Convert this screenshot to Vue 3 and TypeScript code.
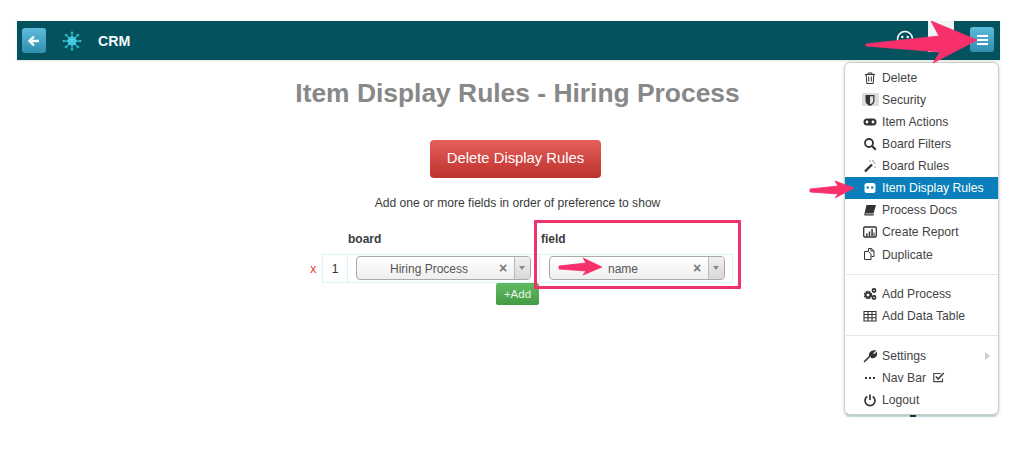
<script setup lang="ts">
interface MenuItem {
  label: string
  icon: string
  active?: boolean
  check?: boolean
  submenu?: boolean
}

const groups: MenuItem[][] = [
  [
    { label: 'Delete', icon: 'trash' },
    { label: 'Security', icon: 'shield' },
    { label: 'Item Actions', icon: 'gamepad' },
    { label: 'Board Filters', icon: 'search' },
    { label: 'Board Rules', icon: 'wand' },
    { label: 'Item Display Rules', icon: 'face', active: true },
    { label: 'Process Docs', icon: 'book' },
    { label: 'Create Report', icon: 'report' },
    { label: 'Duplicate', icon: 'copy' }
  ],
  [
    { label: 'Add Process', icon: 'cogs' },
    { label: 'Add Data Table', icon: 'table' }
  ],
  [
    { label: 'Settings', icon: 'wrench', submenu: true },
    { label: 'Nav Bar', icon: 'dots', check: true },
    { label: 'Logout', icon: 'power' }
  ]
]

const rules = [{ id: 1, board: 'Hiring Process', field: 'name' }]
</script>

<template>
  <div class="page">
    <header class="nav">
      <button class="nav-btn back" aria-label="Back">
        <svg width="12" height="12" viewBox="0 0 12 12">
          <path d="M6 1.500 1.500 6 6 10.500M2 6h9" fill="none" stroke="#fff" stroke-width="2.400" />
        </svg>
      </button>
      <svg class="logo" width="20" height="20" viewBox="0 0 20 20">
        <g stroke="#2bb5c9" stroke-width="1.500" stroke-linecap="round">
          <path d="M10 2v16M2 10h16M4.300 4.300l11.400 11.400M15.700 4.300 4.300 15.700" />
        </g>
        <g fill="#2bb5c9">
          <circle cx="10" cy="1.800" r="1.300" />
          <circle cx="10" cy="18.200" r="1.300" />
          <circle cx="1.800" cy="10" r="1.300" />
          <circle cx="18.200" cy="10" r="1.300" />
          <circle cx="4" cy="4" r="1.300" />
          <circle cx="16" cy="4" r="1.300" />
          <circle cx="4" cy="16" r="1.300" />
          <circle cx="16" cy="16" r="1.300" />
        </g>
        <circle cx="10" cy="10" r="4.500" fill="#45cbdc" />
      </svg>
      <span class="brand">CRM</span>
      <div class="nav-right">
        <svg class="smile" width="18" height="18" viewBox="0 0 18 18">
          <circle cx="9" cy="9" r="7.500" fill="none" stroke="#fff" stroke-width="1.500" />
          <circle cx="6.300" cy="7" r="1.200" fill="#fff" />
          <circle cx="11.700" cy="7" r="1.200" fill="#fff" />
        </svg>
        <div class="avatar"></div>
        <button class="nav-btn burger" aria-label="Menu">
          <span></span><span></span><span></span>
        </button>
      </div>
    </header>

    <main class="content">
      <h1 class="title">Item Display Rules - Hiring Process</h1>
      <button class="delete-btn">Delete Display Rules</button>
      <p class="hint">Add one or more fields in order of preference to show</p>

      <div class="rules">
        <div class="rules-head">
          <span class="col-board">board</span>
          <span class="col-field">field</span>
        </div>
        <div v-for="rule in rules" :key="rule.id" class="rule-row">
          <span class="remove">x</span>
          <span class="cell num">{{ rule.id }}</span>
          <div class="cell select-cell board-cell">
            <div class="select">
              <span class="select-value">{{ rule.board }}</span>
              <span class="select-clear">×</span>
              <span class="select-arrow"></span>
            </div>
          </div>
          <div class="cell select-cell field-cell">
            <div class="select">
              <span class="select-value">{{ rule.field }}</span>
              <span class="select-clear">×</span>
              <span class="select-arrow"></span>
            </div>
          </div>
        </div>
        <div class="add-row">
          <button class="add-btn">+Add</button>
        </div>
      </div>
    </main>

    <!-- what shows of the page under the dropdown's bottom edge -->
    <div class="under-menu"></div>

    <!-- dropdown -->
    <nav class="menu">
      <template v-for="(group, i) in groups" :key="i">
        <div v-if="i > 0" class="divider"></div>
        <a
          v-for="item in group"
          :key="item.label"
          class="menu-item"
          :class="{ active: item.active }"
        >
          <span class="menu-icon" :class="{ boxed: item.icon === 'shield' }">
            <svg width="14" height="14" viewBox="0 0 14 14">
              <template v-if="item.icon === 'trash'">
                <path d="M2 3.500h10M5 3.500V2h4v1.500M3.200 3.500l.6 9h6.400l.6-9M5.700 5.500v5M8.300 5.500v5" fill="none" stroke="currentColor" stroke-width="1" />
              </template>
              <template v-else-if="item.icon === 'shield'">
                <path d="M2.500 2h9v5.500c0 3-2.500 4.500-4.500 5.500-2-1-4.500-2.500-4.500-5.500z" fill="currentColor" />
                <path d="M7 3.200h3.300v4.300c0 2-1.700 3-3.300 4z" fill="#ddd" />
              </template>
              <template v-else-if="item.icon === 'gamepad'">
                <rect x="0.500" y="3.500" width="13" height="7" rx="3.500" fill="currentColor" />
                <circle cx="4" cy="7" r="1.400" fill="#fff" />
                <circle cx="10" cy="7" r="1.400" fill="#fff" />
              </template>
              <template v-else-if="item.icon === 'search'">
                <circle cx="6" cy="6" r="4" fill="none" stroke="currentColor" stroke-width="1.800" />
                <path d="m9 9 3.800 3.800" stroke="currentColor" stroke-width="2.200" />
              </template>
              <template v-else-if="item.icon === 'wand'">
                <path d="M2 12.500 9 5.500" stroke="currentColor" stroke-width="2.400" />
                <path d="M10 1v2M12.500 4h-2M12 7.500v1.500M6 2h1.500" stroke="#888" stroke-width="1" />
              </template>
              <template v-else-if="item.icon === 'face'">
                <rect x="1.500" y="2" width="11" height="10" rx="2.500" fill="#fff" />
                <circle cx="4.800" cy="6.500" r="1.200" fill="#0a7fbb" />
                <circle cx="9.200" cy="6.500" r="1.200" fill="#0a7fbb" />
              </template>
              <template v-else-if="item.icon === 'book'">
                <path d="M3.500 2h9.500l-2.500 8.500H1.500z" fill="currentColor" />
                <path d="M1.500 10.500c-.7 1.500 0 2 1 2h8l.5-1.200H3c-.6 0-.7-.5-.4-.8z" fill="currentColor" />
              </template>
              <template v-else-if="item.icon === 'report'">
                <rect x="0.700" y="2" width="12.600" height="10" rx="1" fill="none" stroke="currentColor" stroke-width="1.300" />
                <path d="M3 8.500h1.500V11H3zM5.700 6.500h1.500V11H5.700zM8.300 4h1.500v7H8.300zM10.500 7.500h1V11h-1z" fill="currentColor" />
              </template>
              <template v-else-if="item.icon === 'copy'">
                <path d="M5.500 4.500V1.500h3l2.500 2.500v5.500H8.500M8 1.500V4h3M1.500 4.500h4l2.500 2.500v5.500H1.500z" fill="none" stroke="currentColor" stroke-width="1" />
              </template>
              <template v-else-if="item.icon === 'cogs'">
                <circle cx="5" cy="8" r="2.900" fill="none" stroke="currentColor" stroke-width="2.600" stroke-dasharray="1.700 .6" />
                <circle cx="5" cy="8" r="2.400" fill="none" stroke="currentColor" stroke-width="1.500" />
                <circle cx="11" cy="3.500" r="1.600" fill="none" stroke="currentColor" stroke-width="1.600" />
                <circle cx="11" cy="10.500" r="1.600" fill="none" stroke="currentColor" stroke-width="1.600" />
              </template>
              <template v-else-if="item.icon === 'table'">
                <path d="M1 2.500h12v9.500H1zM1 5.500h12M1 8.700h12M5 2.500V12M9 2.500V12" fill="none" stroke="currentColor" stroke-width="1.100" />
              </template>
              <template v-else-if="item.icon === 'wrench'">
                <path d="M1.500 12.500 7 7M7 7c-.8-2.500 1-5.200 4.500-5L9.500 4l.5 1.500 1.500.5 2-2c.3 3.200-2.500 5-5 4.200" fill="currentColor" stroke="currentColor" stroke-width="1.600" stroke-linecap="round" />
              </template>
              <template v-else-if="item.icon === 'dots'">
                <path d="M2 6h2v2H2zM6 6h2v2H6zM10 6h2v2h-2z" fill="currentColor" />
              </template>
              <template v-else-if="item.icon === 'power'">
                <path d="M4.300 3.500a5 5 0 1 0 5.400 0M7 1.500V7" fill="none" stroke="currentColor" stroke-width="1.700" />
              </template>
            </svg>
          </span>
          <span>{{ item.label }}</span>
          <svg v-if="item.check" class="check" width="13" height="13" viewBox="0 0 13 13">
            <path d="M10.500 7.500v3.200H1.800V2.500h7" fill="none" stroke="#444" stroke-width="1.200" />
            <path d="m3.800 5.500 2.400 2.500 5.500-6" fill="none" stroke="#444" stroke-width="1.700" />
          </svg>
          <span v-if="item.submenu" class="caret"></span>
        </a>
      </template>
    </nav>

    <!-- screenshot annotations -->
    <div class="callout"></div>
    <svg class="arrows" width="1020" height="450" viewBox="0 0 1020 450">
      <g fill="#f72f6a" stroke="#f72f6a" stroke-width="0.800" stroke-linejoin="round">
        <path d="M866 44 866 46 940 52 933 63 977 40 931 21 939 36Z" />
        <path d="M810 189 810 192 838 194 835 198 854 188 835 181 838 186Z" />
        <path d="M559 266 559 269 586 271 583 275 602 267 583 258 586 263Z" />
      </g>
    </svg>
  </div>
</template>

<style>
html,
body {
  margin: 0;
  background: #fff;
}
</style>

<style scoped>
.page {
  position: relative;
  width: 1020px;
  height: 450px;
  overflow: hidden;
  background: #fff;
  font-family: "Liberation Sans", Arial, sans-serif;
  color: #333;
  padding: 21px 20px 0 17px;
  box-sizing: border-box;
}

.nav {
  height: 39px;
  background: #05525f;
  display: flex;
  align-items: center;
  padding: 0 6px 0 5px;
  box-shadow: 0 1px 2px rgba(0, 0, 0, 0.12);
}

.nav-btn {
  width: 24px;
  height: 25px;
  padding: 0;
  border: none;
  border-radius: 3px;
  background: linear-gradient(#5dbbdc, #2f8fae);
  display: flex;
  align-items: center;
  justify-content: center;
}

.logo {
  margin-left: 16px;
}

.brand {
  margin-left: 16px;
  font-size: 14.200px;
  font-weight: 700;
  color: #f4f8f8;
}

.nav-right {
  margin-left: auto;
  display: flex;
  align-items: flex-start;
  align-self: stretch;
}

.smile {
  margin: 9px 14px 0 0;
}

.avatar {
  width: 26px;
  height: 31px;
  background: #eef5f4;
  margin-right: 16px;
}

.burger {
  flex-direction: column;
  gap: 2px;
  margin-top: 6px;
}

.burger span {
  display: block;
  width: 11px;
  height: 2px;
  background: #fff;
}

.content {
  display: flex;
  flex-direction: column;
  align-items: center;
  padding-left: 18px;
}

.title {
  margin: 17px 0 0;
  font-size: 26.400px;
  line-height: 32px;
  font-weight: 700;
  color: #888;
}

.delete-btn {
  margin: 31px 4px 0 0;
  width: 171px;
  height: 38px;
  padding: 0 0 2px;
  border: none;
  border-radius: 4px;
  background: linear-gradient(#e45f5c, #bd322c);
  color: #fff;
  font-family: inherit;
  font-size: 14.800px;
}

.hint {
  margin: 18px 0 0;
  font-size: 12.100px;
  line-height: 14px;
  color: #3a3a3a;
}

.rules {
  width: 425px;
  margin: 21px 0 0 6px;
  font-size: 12px;
}

.rules-head {
  display: flex;
  height: 16px;
  line-height: 16px;
  font-weight: 700;
  margin-bottom: 7px;
  color: #3c3c3c;
}

.col-board {
  margin-left: 40px;
  width: 193px;
}

.rule-row {
  display: flex;
  align-items: stretch;
  height: 29px;
}

.remove {
  width: 14px;
  color: #e5403c;
  line-height: 30px;
  padding-left: 2px;
  box-sizing: border-box;
  font-size: 13px;
}

.cell {
  border: 1px solid #d8f5f7;
  box-sizing: border-box;
  margin-left: -1px;
}

.num {
  width: 26px;
  margin-left: 0;
  text-align: center;
  line-height: 28px;
}

.select-cell {
  padding: 1px 7px;
}

.board-cell {
  width: 193px;
  padding-left: 8px;
}

.field-cell {
  width: 194px;
  padding-left: 9px;
}

.select {
  height: 24px;
  display: flex;
  align-items: center;
  border: 1px solid #aaa;
  border-radius: 4px;
  box-sizing: border-box;
  background: linear-gradient(#fff, #eee);
  color: #555;
}

.board-cell .select {
  width: 175px;
}

.field-cell .select {
  width: 176px;
}

.select-value {
  flex: 1;
  text-align: center;
  font-size: 12px;
  padding: 1px 0 0 2px;
}

.field-cell .select-value {
  padding-left: 3px;
}

.select-clear {
  width: 15px;
  font-size: 14px;
  font-weight: 700;
  color: #777;
  line-height: 20px;
}

.select-arrow {
  width: 15px;
  align-self: stretch;
  border-left: 1px solid #bbb;
  background: linear-gradient(#f0f0f0, #d8d8d8);
  border-radius: 0 3px 3px 0;
  position: relative;
}

.select-arrow::after {
  content: "";
  position: absolute;
  left: 4px;
  top: 9px;
  border: 3px solid transparent;
  border-top: 4px solid #888;
  border-bottom: none;
}

.add-row {
  padding-left: 188px;
}

.add-btn {
  display: block;
  width: 43px;
  height: 22px;
  padding: 0;
  border: none;
  border-radius: 2px;
  background: linear-gradient(#62bb62, #439a43);
  color: #eaf5ea;
  font-family: inherit;
  font-size: 11.500px;
}

.under-menu {
  position: absolute;
  left: 846px;
  top: 414px;
  width: 150px;
  height: 3px;
  background: linear-gradient(#0d3f4a, #0d3f4a) 64px 0 / 6px 3px no-repeat, #d9eef2;
}

.menu {
  position: absolute;
  left: 844px;
  top: 62px;
  width: 155px;
  height: 353px;
  box-sizing: border-box;
  padding-top: 3.600px;
  background: #fff;
  border: 1px solid #c9cfc8;
  border-left-color: #d3d6b8;
  border-radius: 6px;
  box-shadow: 0 1px 3px rgba(0, 0, 0, 0.22);
  font-size: 12.200px;
}

.menu-item {
  display: flex;
  align-items: center;
  height: 22.120px;
  padding-left: 37px;
  color: #444;
  position: relative;
}

.menu-item.active {
  background: #0a7fbb;
  color: #fff;
}

.menu-icon {
  position: absolute;
  left: 18px;
  top: 4px;
  width: 14px;
  height: 14px;
  color: #333;
}

.menu-icon.boxed::before {
  content: "";
  position: absolute;
  left: -1px;
  top: 0;
  width: 17px;
  height: 13px;
  background: #ddd;
}

.menu-icon svg {
  position: relative;
  display: block;
}

.active .menu-icon {
  color: #fff;
}

.check {
  margin-left: 6px;
}

.caret {
  margin-left: auto;
  margin-right: 8px;
  border: 4px solid transparent;
  border-left: 5px solid #ccc;
  border-right: none;
}

.divider {
  height: 1px;
  background: #e6e6e6;
  margin: 8px 0 8.500px 1px;
}

.callout {
  position: absolute;
  left: 534px;
  top: 220px;
  width: 207px;
  height: 69px;
  box-sizing: border-box;
  border: 3px solid #f0326b;
  border-radius: 1px;
  pointer-events: none;
}

.arrows {
  position: absolute;
  left: 0;
  top: 0;
  pointer-events: none;
}
</style>
